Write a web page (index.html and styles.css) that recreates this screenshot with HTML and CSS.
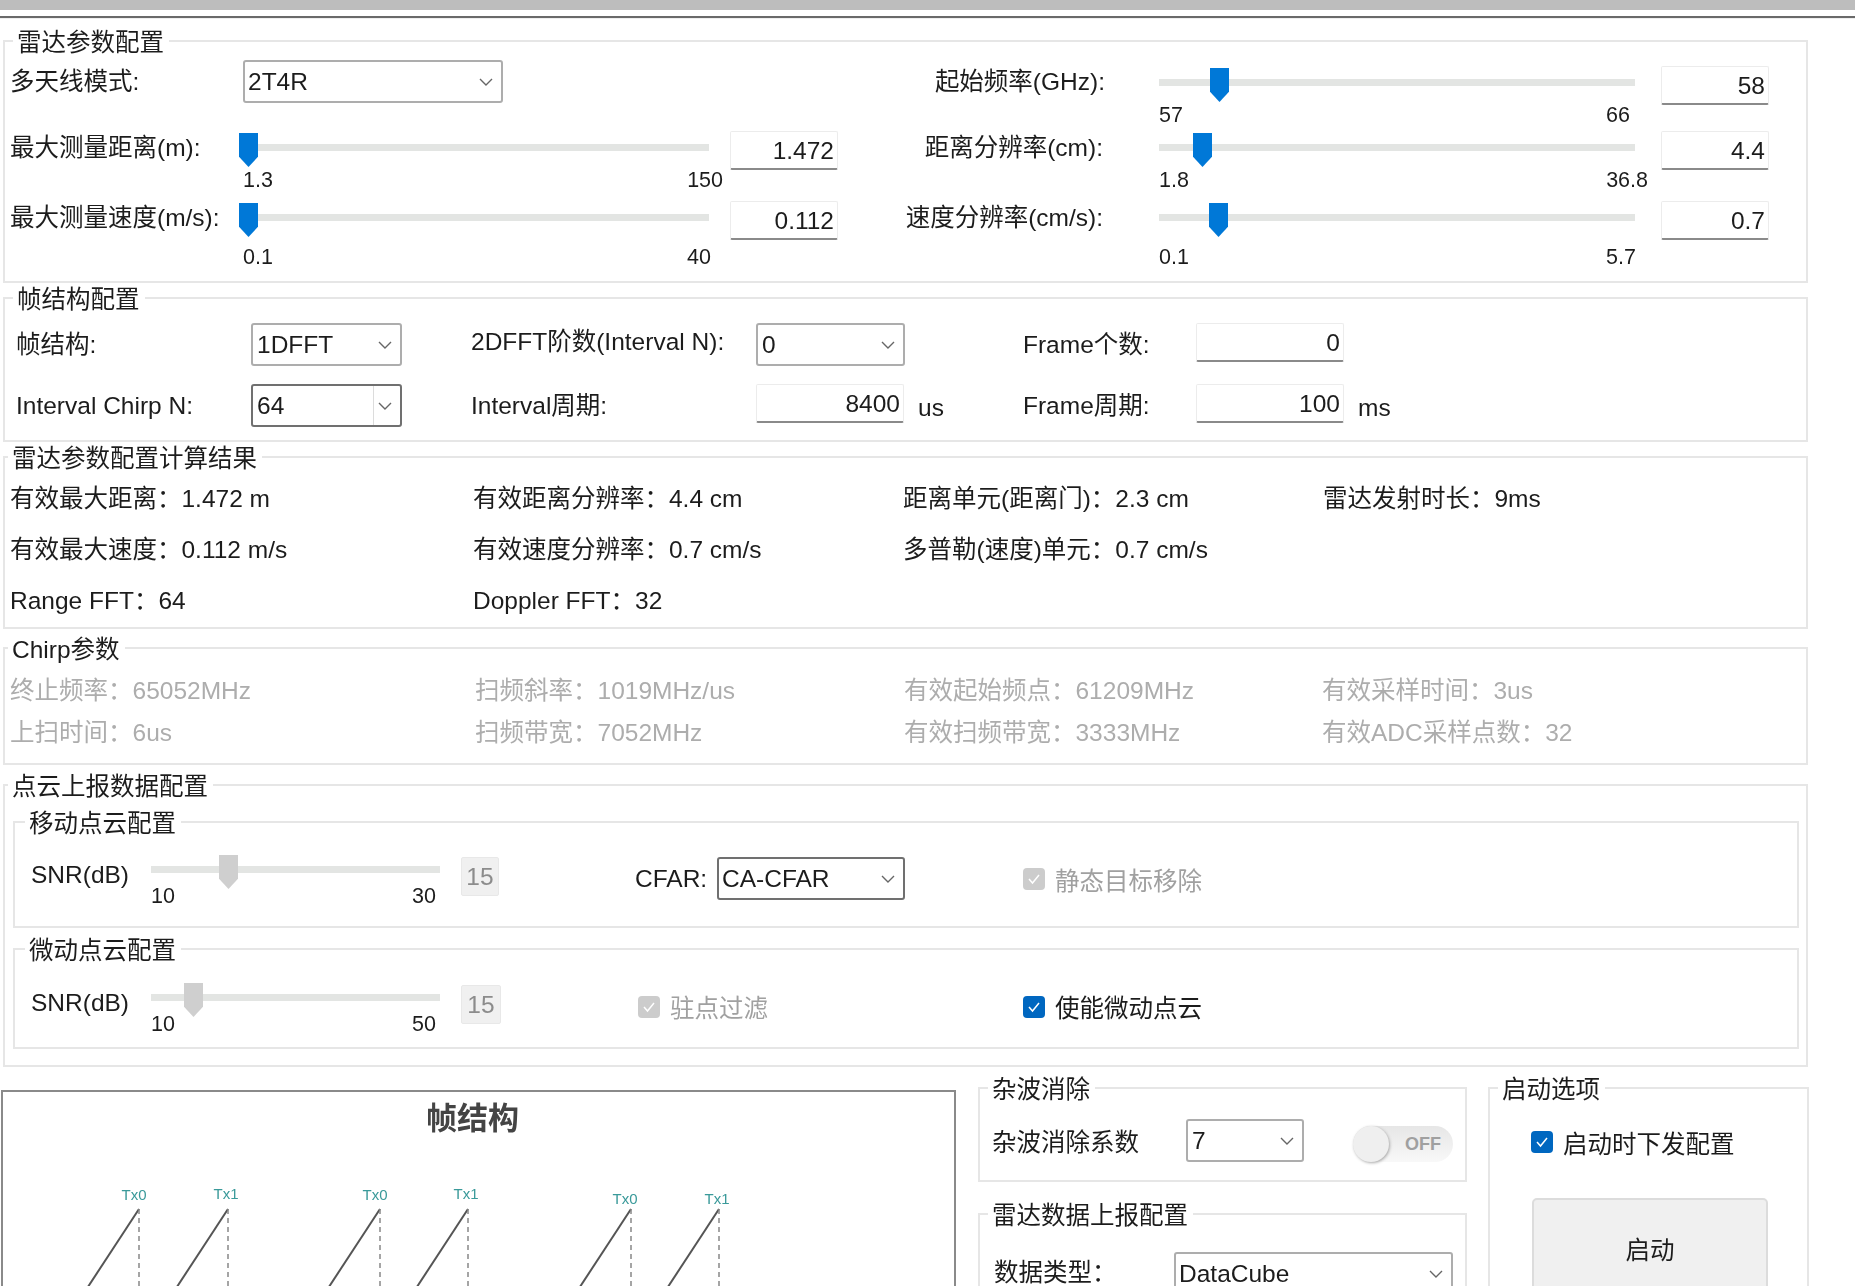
FILE: index.html
```html
<!DOCTYPE html>
<html lang="zh-CN">
<head>
  <meta charset="UTF-8" />
  <title>雷达参数配置</title>
  <link rel="stylesheet" href="styles.css">
</head>
<body>
  <div class="topbar"></div>
  <div class="toprule"></div>
  <div class="app">

    <fieldset class="group radar">
      <legend class="wide">雷达参数配置</legend>
      <div class="radar-grid">
        <div class="label first">多天线模式:</div>
        <div><div class="select mode">2T4R<svg class="chev" viewBox="0 0 14 8"><path d="M1 1l6 6 6-6"/></svg></div></div>
        <div></div>
        <div class="label right first">起始频率(GHz):</div>
        <div class="slider first-slider">
          <div class="track"><span class="thumb" style="left:51px"></span></div>
          <div class="ticks"><span>57</span><span style="margin-right:31px">66</span></div>
        </div>
        <div class="box first-box">58</div>

        <div class="label">最大测量距离(m):</div>
        <div class="slider left-slider">
          <div class="track"><span class="thumb" style="left:0"></span></div>
          <div class="ticks"><span>1.3</span><span>150</span></div>
        </div>
        <div class="box">1.472</div>
        <div class="label right nudge">距离分辨率(cm):</div>
        <div class="slider">
          <div class="track"><span class="thumb" style="left:34px"></span></div>
          <div class="ticks"><span>1.8</span><span style="margin-right:13px">36.8</span></div>
        </div>
        <div class="box">4.4</div>

        <div class="label">最大测量速度(m/s):</div>
        <div class="slider left-slider far">
          <div class="track"><span class="thumb" style="left:0"></span></div>
          <div class="ticks"><span>0.1</span><span style="margin-right:12px">40</span></div>
        </div>
        <div class="box">0.112</div>
        <div class="label right nudge">速度分辨率(cm/s):</div>
        <div class="slider far">
          <div class="track"><span class="thumb" style="left:50px"></span></div>
          <div class="ticks"><span>0.1</span><span style="margin-right:25px">5.7</span></div>
        </div>
        <div class="box">0.7</div>
      </div>
    </fieldset>

    <fieldset class="group frame">
      <legend class="wide">帧结构配置</legend>
      <div class="frame-grid">
        <div class="label">帧结构:</div>
        <div class="cell"><div class="select w151">1DFFT<svg class="chev" viewBox="0 0 14 8"><path d="M1 1l6 6 6-6"/></svg></div></div>
        <div class="label raised">2DFFT阶数(Interval N):</div>
        <div class="cell"><div class="select w149">0<svg class="chev" viewBox="0 0 14 8"><path d="M1 1l6 6 6-6"/></svg></div></div>
        <div class="label">Frame个数:</div>
        <div class="cell"><div class="box w148">0</div></div>

        <div class="label">Interval Chirp N:</div>
        <div class="cell"><div class="select w151 dark combo">64<svg class="chev" viewBox="0 0 14 8"><path d="M1 1l6 6 6-6"/></svg></div></div>
        <div class="label">Interval周期:</div>
        <div class="cell"><div class="box w148">8400</div><span class="unit">us</span></div>
        <div class="label">Frame周期:</div>
        <div class="cell"><div class="box w148">100</div><span class="unit">ms</span></div>
      </div>
    </fieldset>

    <fieldset class="group result">
      <legend>雷达参数配置计算结果</legend>
      <div class="result-grid">
        <div>有效最大距离：1.472 m</div>
        <div>有效距离分辨率：4.4 cm</div>
        <div>距离单元(距离门)：2.3 cm</div>
        <div>雷达发射时长：9ms</div>
        <div>有效最大速度：0.112 m/s</div>
        <div>有效速度分辨率：0.7 cm/s</div>
        <div>多普勒(速度)单元：0.7 cm/s</div>
        <div></div>
        <div>Range FFT：64</div>
        <div>Doppler FFT：32</div>
      </div>
    </fieldset>

    <fieldset class="group chirp">
      <legend>Chirp参数</legend>
      <div class="chirp-grid">
        <div>终止频率：65052MHz</div>
        <div>扫频斜率：1019MHz/us</div>
        <div>有效起始频点：61209MHz</div>
        <div>有效采样时间：3us</div>
        <div>上扫时间：6us</div>
        <div>扫频带宽：7052MHz</div>
        <div>有效扫频带宽：3333MHz</div>
        <div>有效ADC采样点数：32</div>
      </div>
    </fieldset>

    <fieldset class="group cloud">
      <legend>点云上报数据配置</legend>

      <fieldset class="group sub moving">
        <legend>移动点云配置</legend>
        <div class="moving-grid">
          <div class="label snr">SNR(dB)</div>
          <div class="slider off near">
            <div class="track"><span class="thumb" style="left:68px"></span></div>
            <div class="ticks"><span>10</span><span style="margin-right:25px">30</span></div>
          </div>
          <div class="box off w38">15</div>
          <div class="label cfar">CFAR:</div>
          <div><div class="select dark w188">CA-CFAR<svg class="chev" viewBox="0 0 14 8"><path d="M1 1l6 6 6-6"/></svg></div></div>
          <label class="check off"><span class="tick"><svg viewBox="0 0 22 22"><path d="M6 11l3.5 4 6.5-8"/></svg></span>静态目标移除</label>
        </div>
      </fieldset>

      <fieldset class="group sub micro">
        <legend>微动点云配置</legend>
        <div class="micro-grid">
          <div class="label snr">SNR(dB)</div>
          <div class="slider off near">
            <div class="track"><span class="thumb" style="left:33px"></span></div>
            <div class="ticks"><span>10</span><span style="margin-right:25px">50</span></div>
          </div>
          <div class="box off w40">15</div>
          <label class="check off"><span class="tick"><svg viewBox="0 0 22 22"><path d="M6 11l3.5 4 6.5-8"/></svg></span>驻点过滤</label>
          <label class="check"><span class="tick"><svg viewBox="0 0 22 22"><path d="M6 11l3.5 4 6.5-8"/></svg></span>使能微动点云</label>
        </div>
      </fieldset>
    </fieldset>

    <div class="bottom">
      <div class="chart">
        <h2>帧结构</h2>
        <svg class="chirps" viewBox="0 0 951 150">
          <g class="ramps">
            <path d="M80.3 150L136 65"/>
            <path d="M169.3 150L225 65"/>
            <path d="M321.3 150L377 65"/>
            <path d="M409.3 150L465 65"/>
            <path d="M572.3 150L628 65"/>
            <path d="M660.3 150L716 65"/>
          </g>
          <g class="drops">
            <path d="M136 65V150"/>
            <path d="M225 65V150"/>
            <path d="M377 65V150"/>
            <path d="M465 65V150"/>
            <path d="M628 65V150"/>
            <path d="M716 65V150"/>
          </g>
          <g class="tx">
            <text x="131" y="56">Tx0</text>
            <text x="223" y="55">Tx1</text>
            <text x="372" y="56">Tx0</text>
            <text x="463" y="55">Tx1</text>
            <text x="622" y="60">Tx0</text>
            <text x="714" y="60">Tx1</text>
          </g>
        </svg>
      </div>

      <div class="middle">
        <fieldset class="group clutter">
          <legend class="wide">杂波消除</legend>
          <div class="clutter-row">
            <div class="label">杂波消除系数</div>
            <div class="select w118">7<svg class="chev" viewBox="0 0 14 8"><path d="M1 1l6 6 6-6"/></svg></div>
            <div class="toggle"><span class="knob"></span>OFF</div>
          </div>
        </fieldset>
        <fieldset class="group report">
          <legend class="wide">雷达数据上报配置</legend>
          <div class="report-row">
            <div class="label">数据类型：</div>
            <div class="select w279">DataCube<svg class="chev" viewBox="0 0 14 8"><path d="M1 1l6 6 6-6"/></svg></div>
          </div>
        </fieldset>
      </div>

      <fieldset class="group startup">
        <legend class="wide">启动选项</legend>
        <label class="check"><span class="tick"><svg viewBox="0 0 22 22"><path d="M6 11l3.5 4 6.5-8"/></svg></span>启动时下发配置</label>
        <button class="start">启动</button>
      </fieldset>
    </div>

  </div>
</body>
</html>
```

FILE: styles.css
```css
* {
  box-sizing: border-box;
  font-family: "Liberation Sans", "Noto Sans CJK SC", sans-serif;
}
html, body {
  margin: 0;
  height: 1286px;
  overflow: hidden;
  background: #fff;
}
body {
  color: #1c1c1c;
  font-size: 24.5px;
}
.topbar {
  height: 10px;
  background: #bdbdbd;
}
.toprule {
  height: 3px;
  margin-top: 6px;
  background: #6a6a6a;
  border-bottom: 1px solid #eee;
}
.app {
  width: 1855px;
  padding-top: 7px;
  filter: blur(0.45px);
}

/* group boxes */
.group {
  margin: 0 0 0 3px;
  padding: 0;
  width: 1805px;
  min-width: 0;
  border: 2px solid #e6e6e6;
}
legend {
  margin-left: 3px;
  padding: 4px 5px 0 4px;
  line-height: 26px;
  font-size: 24.5px;
}
legend.wide {
  margin-left: 8px;
}
.radar { height: 257px; }
.frame { height: 159px; }
.result { height: 187px; }
.chirp { height: 132px; margin-top: 4px; }
.cloud { height: 297px; margin-top: 5px; }
.sub {
  margin-left: 8px;
  width: 1786px;
}
.sub legend {
  margin-left: 10px;
}
.moving { height: 121px; margin-top: 7px; }
.micro { height: 115px; margin-top: 6px; }

.label {
  white-space: nowrap;
  line-height: 34px;
}
.label.first { line-height: 44px; }
.label.right { text-align: right; }
.label.nudge { padding-right: 2px; }
.label.raised { margin-bottom: 6px; }

/* radar params */
.radar-grid {
  display: grid;
  grid-template-columns: 229px 491px 108px 267px 556px 108px;
  grid-template-rows: 71px 70px auto;
  align-items: start;
  padding: 4px 0 0 5px;
}
.radar-grid .slider { margin-left: 54px; }
.radar-grid .left-slider { margin-left: 0; width: 484px; }
.radar-grid .slider.first-slider { margin-top: 8px; }
.first-box { margin-top: 6px; }

.select {
  display: flex;
  align-items: center;
  justify-content: space-between;
  height: 43px;
  padding: 0 8px 0 3px;
  background: #fff;
  border: 2px solid #adadad;
  border-radius: 3px;
  white-space: nowrap;
}
.select.dark { border-color: #707070; }
.select.combo { background: linear-gradient(to right, #fff 120px, #dcdcdc 120px, #dcdcdc 121px, #fff 121px); }
.select.mode { width: 260px; margin-left: 4px; }
.w149 { width: 149px; padding-left: 4px; }
.w151 { width: 151px; padding-left: 4px; }
.w188 { width: 188px; }
.w118 { width: 118px; padding-left: 4px; }
.w279 { width: 279px; }
.chev {
  width: 14px;
  height: 8px;
  flex: none;
  fill: none;
  stroke: #666;
  stroke-width: 1.4;
}

.box {
  display: flex;
  align-items: center;
  justify-content: flex-end;
  width: 108px;
  height: 39px;
  padding: 2px 3px 0 0;
  background: #fff;
  border: 1px solid #ececec;
  border-bottom: 2px solid #8a8a8a;
  border-radius: 2px;
}
.box.w148 { width: 148px; }
.box.off {
  justify-content: center;
  padding: 0;
  background: #f0f0f0;
  border: 1px solid #e8e8e8;
  color: #8c8c8c;
}
.box.w38 { width: 38px; }
.box.w40 { width: 40px; }

/* sliders */
.slider {
  margin-top: 2px;
  font-size: 21.5px;
  line-height: 24px;
}
.track {
  position: relative;
  width: 476px;
  height: 7px;
  margin-top: 11px;
  background: #e3e5e3;
}
.left-slider .track { width: 470px; }
.thumb {
  position: absolute;
  top: -11px;
  width: 19px;
  height: 34px;
  background: #0078d7;
  clip-path: polygon(0 0, 100% 0, 100% 70%, 50% 100%, 0 70%);
}
.ticks {
  display: flex;
  justify-content: space-between;
  margin-top: 17px;
}
.left-slider .ticks { padding-left: 4px; }
.far .ticks { margin-top: 24px; }
.slider.near { margin-top: 0; }
.near .track { width: 289px; }
.near .ticks { margin-top: 11px; }
.off .thumb { background: #cfcfcf; }

/* frame config */
.frame-grid {
  display: grid;
  grid-template-columns: 235px 220px 285px 267px 173px auto;
  grid-template-rows: 43px 43px;
  row-gap: 18px;
  align-items: center;
  padding: 10px 0 0 11px;
}
.cell {
  display: flex;
  align-items: flex-start;
  align-self: start;
  gap: 14px;
}
.unit { line-height: 48px; }

/* calc results, Noto TC centres the full-width colon like the reference */
.result-grid,
.chirp-grid {
  display: grid;
  align-items: center;
  padding-left: 5px;
  white-space: nowrap;
}
.result-grid div,
.chirp-grid div {
  font-family: "Liberation Sans", "Noto Sans CJK TC", sans-serif;
}
.result-grid {
  grid-template-columns: 463px 430px 420px auto;
  grid-auto-rows: 51px;
  margin-top: -1px;
}
.chirp-grid {
  grid-template-columns: 465px 429px 418px auto;
  grid-auto-rows: 42px;
  padding-top: 4px;
  color: #adadad;
}

/* point cloud */
.moving-grid,
.micro-grid {
  display: grid;
  align-items: start;
  padding-left: 16px;
}
.moving-grid {
  grid-template-columns: 120px 310px 174px 82px 306px auto;
  padding-top: 18px;
}
.micro-grid {
  grid-template-columns: 120px 310px 177px 385px auto;
  padding-top: 19px;
}
.label.snr { line-height: 40px; }
.label.cfar { line-height: 48px; }
.moving-grid .box,
.moving-grid .select { margin-top: 2px; }
.micro-grid .box { margin-top: 2px; }

.check {
  display: flex;
  align-items: center;
  gap: 10px;
  height: 48px;
  white-space: nowrap;
}
.micro-grid .check { height: 47px; }
.check.off { color: #a0a0a0; }
.tick {
  width: 22px;
  height: 22px;
  flex: none;
  background: #0067c0;
  border-radius: 4px;
}
.tick svg {
  display: block;
  fill: none;
  stroke: #fff;
  stroke-width: 1.5;
}
.check.off .tick { background: #cccccc; }

/* bottom row */
.bottom {
  display: flex;
  align-items: flex-start;
  margin-top: 6px;
}
.chart {
  flex: none;
  width: 955px;
  height: 260px;
  margin: 17px 0 0 1px;
  border: 2px solid #8a8a8a;
  background: #fff;
}
.chart h2 {
  margin: 0;
  padding: 2px 12px 0 0;
  text-align: center;
  font-size: 31px;
  font-weight: bold;
  line-height: 50px;
  color: #444;
}
.chirps {
  display: block;
  width: 951px;
  height: 150px;
}
.ramps path {
  fill: none;
  stroke: #555;
  stroke-width: 2;
}
.drops path {
  fill: none;
  stroke: #888;
  stroke-width: 1.5;
  stroke-dasharray: 5 4;
}
.tx text {
  fill: #3a9a9a;
  font-size: 15px;
  text-anchor: middle;
}
.middle {
  flex: none;
  width: 489px;
  margin-left: 22px;
}
.middle .group {
  margin: 0;
  width: 489px;
}
.clutter { height: 109px; }
.middle .report { height: 140px; margin-top: 17px; }
.clutter-row {
  display: flex;
  align-items: flex-start;
  padding: 16px 0 0 12px;
}
.clutter-row .label {
  width: 194px;
  line-height: 48px;
}
.toggle {
  display: flex;
  align-items: center;
  justify-content: flex-end;
  width: 100px;
  height: 36px;
  margin: 7px 0 0 49px;
  padding-right: 12px;
  background: linear-gradient(#e6e6e6, #f8f8f8);
  border-radius: 18px;
  color: #a0a0a0;
  font-size: 18px;
  font-weight: bold;
  position: relative;
}
.knob {
  position: absolute;
  left: 0;
  top: 0;
  width: 36px;
  height: 36px;
  border-radius: 50%;
  background: #efefef;
  box-shadow: 1px 1px 3px #aaa;
}
.report-row {
  display: flex;
  align-items: flex-start;
  padding: 23px 0 0 14px;
}
.report-row .label {
  width: 180px;
  line-height: 42px;
}
.startup {
  flex: none;
  width: 321px;
  height: 300px;
  margin: 0 0 0 21px;
}
.startup .check {
  margin: 16px 0 0 41px;
  height: 46px;
}
.startup .start {
  display: block;
  width: 236px;
  height: 120px;
  margin: 33px 0 0 42px;
  padding: 0 0 20px;
  background: #f0f0f0;
  border: 2px solid #dcdcdc;
  border-radius: 5px;
  color: #1c1c1c;
  font-size: 24.5px;
}
```
